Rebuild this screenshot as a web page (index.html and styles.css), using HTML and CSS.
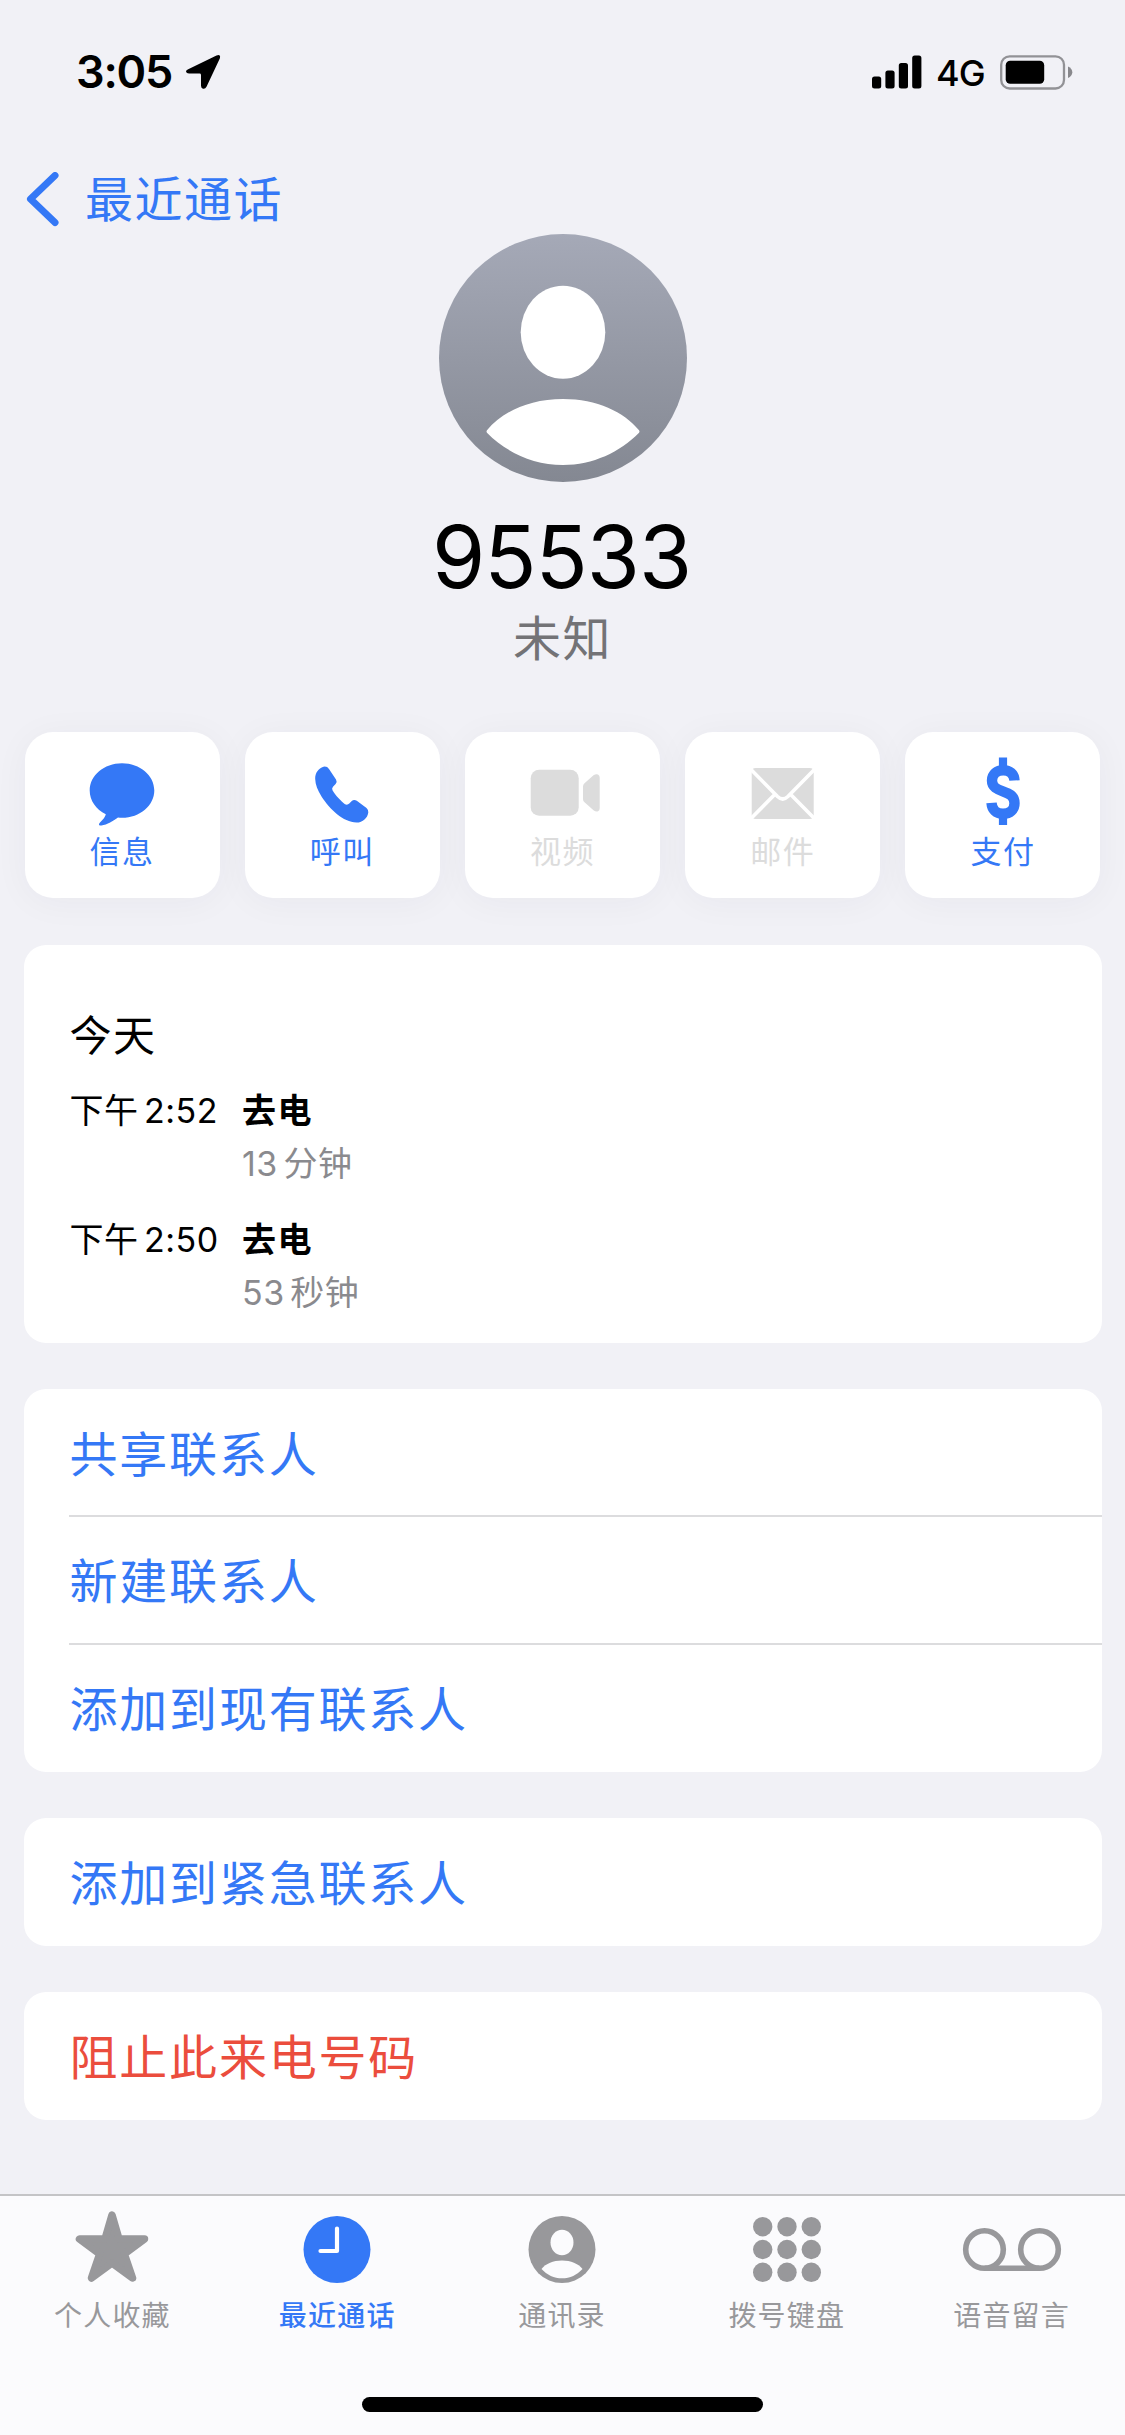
FILE: index.html
```
<!DOCTYPE html>
<html lang="zh-CN">
<head>
<meta charset="utf-8">
<title>95533</title>
<link rel="stylesheet" href="styles.css">
</head>
<body>
<div class="screen">
  <header class="status">
    <div class="status-left">
      <span class="clock">3:05</span>
      <svg class="location" width="36" height="36" viewBox="0 0 36 36"><path d="M3.2 15.2 31.5 1.5Q36.200-.3 34.800 4.500L21.500 32.800Q20 35.600 17.500 34.500 16 33.800 16 31.500V21Q16 19.600 14.600 19.600H4Q1.300 19.400 1 17.500 1 16.200 3.200 15.200Z"/></svg>
    </div>
    <div class="status-right">
      <svg width="50" height="34" viewBox="0 0 50 34"><rect x="0" y="21.500" width="9.200" height="12" rx="2.500"/><rect x="13.400" y="15.500" width="9.200" height="18" rx="2.500"/><rect x="26.800" y="8" width="9.200" height="25.500" rx="2.500"/><rect x="40.200" y="0.500" width="9.200" height="33" rx="2.500"/></svg>
      <span class="network">4G</span>
      <svg width="73" height="35" viewBox="0 0 73 35"><rect x="1.200" y="1.300" width="62.800" height="32.200" rx="8.500" fill="none" stroke="#929296" stroke-width="2.300"/><rect x="5.700" y="5.800" width="38.500" height="23" rx="4.500"/><path d="M68 11.500Q72.300 13.500 72.300 17.300T68 23Z" fill="#88888c"/></svg>
    </div>
  </header>

  <nav class="back">
    <svg width="34" height="56" viewBox="0 0 34 56"><path d="M30 3.500 5.500 27 30 50.500" fill="none" stroke="currentColor" stroke-width="7" stroke-linecap="round" stroke-linejoin="round"/></svg>
    <span class="back-label">最近通话</span>
  </nav>

  <section class="profile">
    <svg class="avatar" width="248" height="248" viewBox="0 0 248 248">
      <defs><linearGradient id="avatar-fill" x1="0" y1="0" x2="0" y2="1"><stop offset="0" stop-color="#a5a9b7"/><stop offset="1" stop-color="#848892"/></linearGradient></defs>
      <circle cx="124" cy="124" r="124" fill="url(#avatar-fill)"/>
      <ellipse cx="124" cy="98.200" rx="42.300" ry="46.500" fill="#fff"/>
      <path d="M48.200 196Q46.800 197.500 48.200 199C67 218 94 231 124 231S181 218 199.800 199Q201.200 197.500 199.800 196C185 178 158 165 124 165S63 178 48.200 196Z" fill="#fff"/>
    </svg>
    <h1 class="number">95533</h1>
    <p class="kind">未知</p>
  </section>

  <section class="actions">
    <button class="action">
      <svg width="90" height="72" viewBox="0 0 90 72"><path d="M45 8.300C63 8.300 77.300 20.500 77.300 35.500S63 62.800 45 62.800C43.500 62.800 42.300 62.700 41 62.600 36.500 66 30 70 24.500 70.600 21.800 70.600 21.300 69.200 23 67.400 26 64.500 28.500 61.500 28.800 59.200 19 54.500 12.700 45.500 12.700 35.500 12.700 20.500 27 8.300 45 8.300Z"/></svg>
      <span>信息</span>
    </button>
    <button class="action">
      <svg width="90" height="72" viewBox="0 0 90 72"><path d="M18.200 24C18 18 21.500 13 26.500 11.700Q30 11 32 14L39 24.500Q40.500 27 38.600 29L36 31.700Q34.500 33.200 35.500 35.200C38.500 40.500 44 46 48 49.200Q50.300 50.400 52.300 48.600L54.500 46.200Q57 44 59.800 45.800L69.500 53Q71.500 54.500 71.300 57.500C70.500 63 66 67.600 59.500 67.600 46 67 33 54.500 24.500 41.500 20.500 35 18.400 29.500 18.200 24Z"/></svg>
      <span>呼叫</span>
    </button>
    <button class="action disabled">
      <svg width="90" height="72" viewBox="0 0 90 72"><rect x="13.700" y="14.800" width="48" height="46" rx="8.500"/><path d="M66 31.500Q66 29.700 67.500 28.300L76.500 20.200Q79 18.500 81 19.500 82.700 20.300 82.700 22.500V53.200Q82.700 55.500 81 56.300 79 57.200 76.500 55.200L67.500 47.300Q66 46 66 44.200Z"/></svg>
      <span>视频</span>
    </button>
    <button class="action disabled">
      <svg width="90" height="72" viewBox="0 0 90 72"><rect x="13.700" y="13" width="62" height="51" rx="4"/><path d="M12.500 14 39.500 41.500Q44.700 46.500 49.900 41.500L76.900 14M12.500 64 37.200 39M76.900 64 52.200 39" fill="none" stroke="#fff" stroke-width="3.600"/></svg>
      <span>邮件</span>
    </button>
    <button class="action">
      <svg width="90" height="72" viewBox="0 0 90 72"><path d="M45 2.500V14M45 61V70" fill="none" stroke="currentColor" stroke-width="8.200"/><path d="M56.500 25.500C56 18.500 51.500 15.200 45.300 15.200S34 19.200 34 25.600C34 39.500 56.500 33 56.500 48.200 56.500 54.500 52 58.800 45 58.800S34 54.500 33.500 47.800" fill="none" stroke="currentColor" stroke-width="10.400"/></svg>
      <span>支付</span>
    </button>
  </section>

  <main class="cards">
    <section class="card history">
      <h2>今天</h2>
      <div class="call">
        <span class="time">下午 2:52</span>
        <div class="call-info"><strong>去电</strong><span class="duration">13 分钟</span></div>
      </div>
      <div class="call">
        <span class="time">下午 2:50</span>
        <div class="call-info"><strong>去电</strong><span class="duration">53 秒钟</span></div>
      </div>
    </section>
    <section class="card">
      <a class="row">共享联系人</a>
      <a class="row">新建联系人</a>
      <a class="row">添加到现有联系人</a>
    </section>
    <section class="card">
      <a class="row">添加到紧急联系人</a>
    </section>
    <section class="card">
      <a class="row danger">阻止此来电号码</a>
    </section>
  </main>

  <footer class="tabbar">
    <nav class="tabs">
      <a class="tab">
        <svg width="100" height="76" viewBox="0 0 100 76"><path d="M50 8 57 32H82.500L62.300 47 70.500 71 50 56 29.500 71 37.700 47 17.500 32H43Z" stroke="currentColor" stroke-width="7.500" stroke-linejoin="round"/></svg>
        <span>个人收藏</span>
      </a>
      <a class="tab active">
        <svg width="100" height="76" viewBox="0 0 100 76"><circle cx="50" cy="42.500" r="33.500"/><path d="M50 21.500V44H33.500" fill="none" stroke="#fff" stroke-width="4.200" stroke-linecap="round" stroke-linejoin="round"/></svg>
        <span>最近通话</span>
      </a>
      <a class="tab">
        <svg width="100" height="76" viewBox="0 0 100 76"><circle cx="50" cy="42.500" r="33.500"/><ellipse cx="50" cy="35.500" rx="11.500" ry="12.700" fill="#fbfbfd"/><path d="M29.500 62C34 56.500 41 53.500 50 53.500S66 56.500 70.500 62C65 68 58 71.300 50 71.300S35 68 29.500 62Z" fill="#fbfbfd"/></svg>
        <span>通讯录</span>
      </a>
      <a class="tab">
        <svg width="100" height="76" viewBox="0 0 100 76"><g><circle cx="25.700" cy="19.700" r="9.700"/><circle cx="50" cy="19.700" r="9.700"/><circle cx="74.300" cy="19.700" r="9.700"/><circle cx="25.700" cy="42.500" r="9.700"/><circle cx="50" cy="42.500" r="9.700"/><circle cx="74.300" cy="42.500" r="9.700"/><circle cx="25.700" cy="65.300" r="9.700"/><circle cx="50" cy="65.300" r="9.700"/><circle cx="74.300" cy="65.300" r="9.700"/></g></svg>
        <span>拨号键盘</span>
      </a>
      <a class="tab">
        <svg width="100" height="76" viewBox="0 0 100 76"><g fill="none" stroke="currentColor" stroke-width="5.600"><circle cx="22.500" cy="42.500" r="18.800"/><circle cx="77.500" cy="42.500" r="18.800"/><path d="M22.500 61.300H77.500"/></g></svg>
        <span>语音留言</span>
      </a>
    </nav>
    <div class="home"></div>
  </footer>
</div>
</body>
</html>
```
FILE: styles.css
```
* { box-sizing: border-box; margin: 0; padding: 0; }
body {
  background: #f1f1f6;
  color: #000;
  font-family: Inter, "Noto Sans CJK SC", sans-serif;
}
svg { display: block; flex: none; fill: currentColor; }

.screen {
  width: 1125px;
  height: 2435px;
  display: flex;
  flex-direction: column;
  overflow: hidden;
}

.status {
  height: 144px;
  display: flex;
  justify-content: space-between;
  padding: 54px 52px 0 76px;
}
.status-left, .status-right {
  display: flex;
  align-items: center;
  height: 36px;
}
.status-left { gap: 13px; }
.clock { font-size: 45px; line-height: 36px; font-weight: 600; letter-spacing: -1.2px; }
.network { width: 78px; padding-left: 14px; padding-top: 1px; font-size: 36px; line-height: 36px; font-weight: 500; letter-spacing: -1px; }

.back {
  height: 90px;
  display: flex;
  align-items: center;
  gap: 26px;
  padding: 21px 0 0 25px;
  color: #3478f6;
}
.back-label { padding-top: 1px; font-size: 48px; line-height: 56px; letter-spacing: 1.5px; }

.profile {
  height: 498px;
  display: flex;
  flex-direction: column;
  align-items: center;
}
.number { margin-top: 25px; padding-right: 2px; font-size: 86px; line-height: 100px; font-weight: 400; letter-spacing: -1px; }
.kind { font-size: 48px; line-height: 64px; letter-spacing: 1.5px; color: #737376; }

.actions {
  height: 213px;
  display: grid;
  grid-template-columns: repeat(5, 1fr);
  gap: 25px;
  padding: 0 24.500px;
}
.action {
  height: 166px;
  display: flex;
  flex-direction: column;
  align-items: center;
  padding-top: 23px;
  border: 0;
  border-radius: 28px;
  background: #fff;
  box-shadow: 0 4px 36px rgba(40, 40, 60, .045);
  color: #3478f6;
  font-family: inherit;
  font-size: 31px;
  line-height: 48px;
  letter-spacing: 1.500px;
}
.action span { margin-top: 1px; }
.disabled { color: #dcdcdc; }

.cards {
  height: 1249px;
  display: flex;
  flex-direction: column;
  gap: 46px;
  padding: 0 23.500px;
}
.card { border-radius: 22px; background: #fff; overflow: hidden; }
.history { height: 398px; padding: 61px 46px 0; }
h2 { font-size: 42px; line-height: 60px; font-weight: 400; letter-spacing: 1.5px; }
.call { display: flex; height: 128.500px; padding-top: 18px; font-size: 34px; line-height: 53px; }
.time { width: 172.500px; white-space: nowrap; letter-spacing: 0.5px; word-spacing: -4.5px; }
.call-info { display: flex; flex-direction: column; }
.call-info strong { font-weight: 700; letter-spacing: 1.5px; }
.duration { color: #8a8a8e; letter-spacing: 0.5px; word-spacing: -4.5px; }
.row {
  display: flex;
  align-items: center;
  height: 128px;
  margin-left: 45.500px;
  padding: 0 0 5px 0.500px;
  color: #3478f6;
  font-size: 48px;
  letter-spacing: 1.800px;
}
.row:first-child:not(:last-child) { height: 126px; padding-bottom: 3px; }
.row + .row { border-top: 2px solid #dcdcde; }
.row + .row:last-child { height: 129px; padding-bottom: 6px; }
.danger { color: #eb4d3d; }

.tabbar {
  flex: 1;
  display: flex;
  flex-direction: column;
  align-items: center;
  border-top: 2px solid #c4c4c6;
  background: #fbfbfd;
}
.tabs { align-self: stretch; height: 201px; display: grid; grid-template-columns: repeat(5, 1fr); padding: 11px 1px 0 0; }
.tab { display: flex; flex-direction: column; align-items: center; color: #98989b; font-size: 28px; line-height: 40px; letter-spacing: 1.200px; }
.tab span { margin-top: 13px; }
.active { color: #3478f6; }
.active span { font-weight: 500; }
.home { width: 401px; height: 14.500px; border-radius: 8px; background: #000; }
```
